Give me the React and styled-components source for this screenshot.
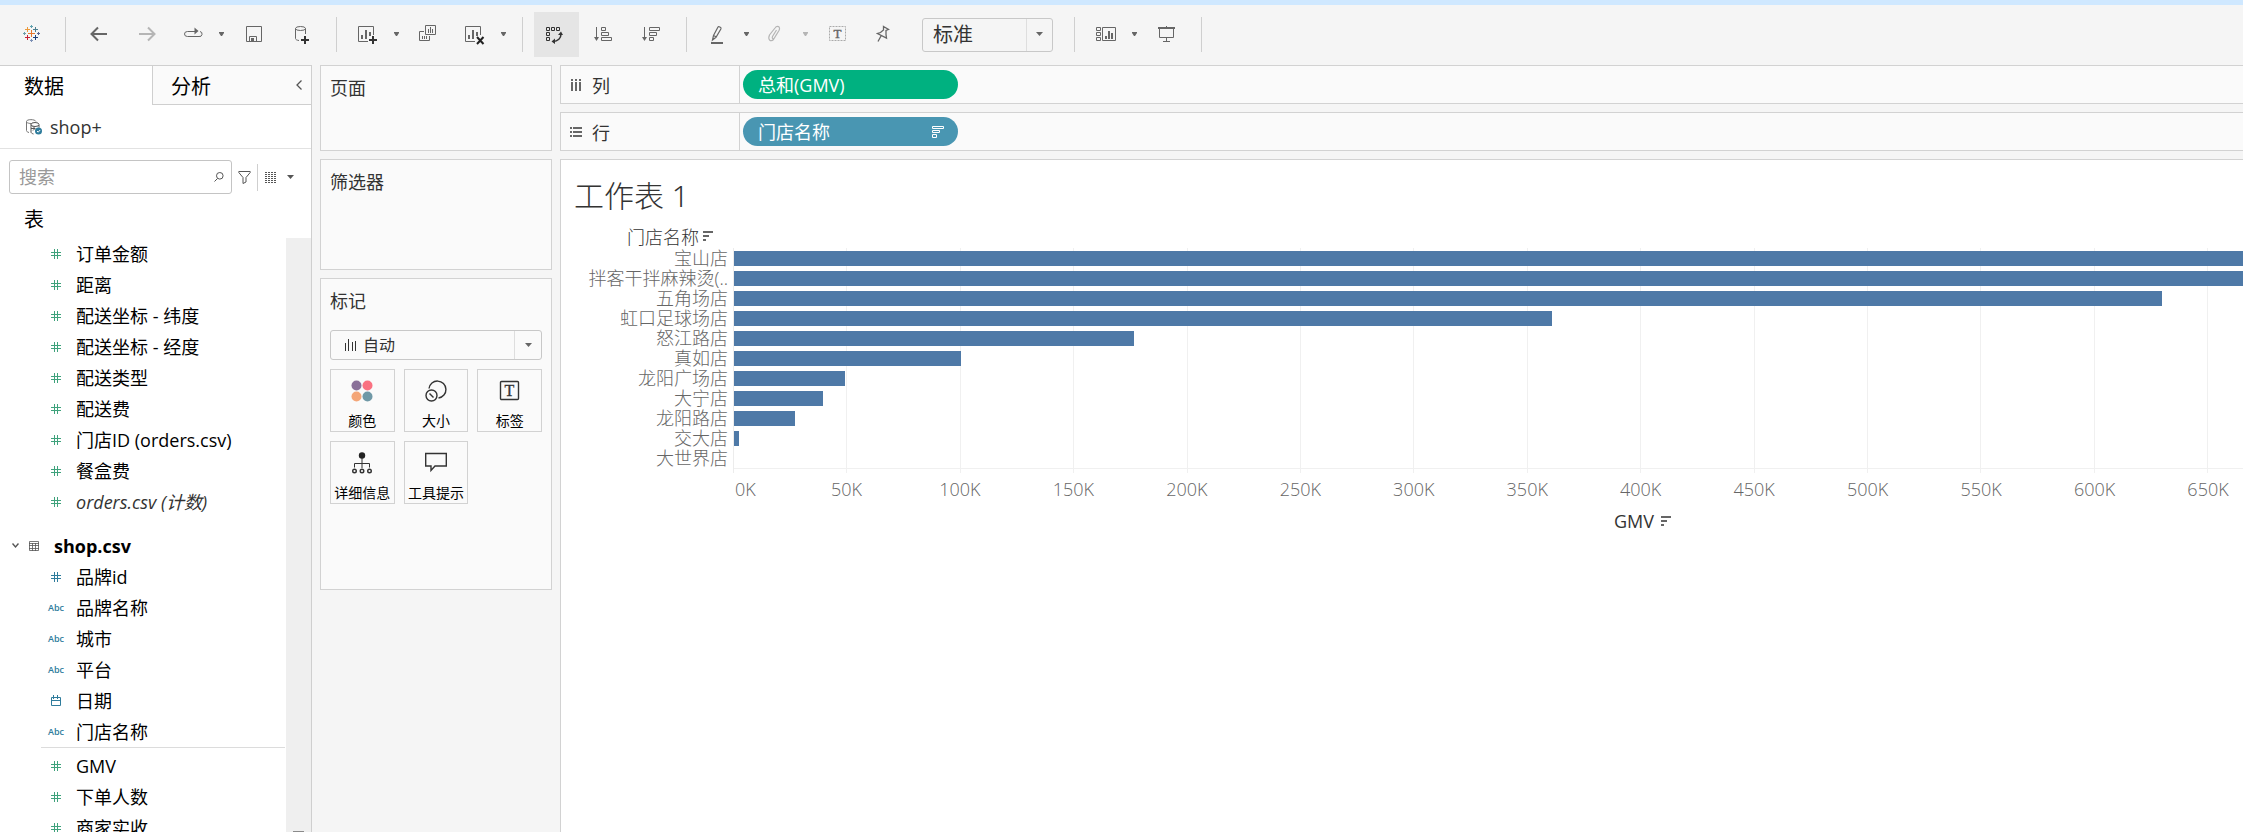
import React from "react";
import styled, { createGlobalStyle, css } from "styled-components";

const GlobalStyle = createGlobalStyle`
	* {
		box-sizing: border-box;
	}
	body {
		margin: 0;
		background: #f5f5f5;
		color: #333;
		font-family: "Open Sans", "Noto Sans CJK SC", sans-serif;
		font-size: 18px;
	}
	button, input, select {
		font-family: inherit;
		color: inherit;
	}
	button {
		padding: 0;
		border: 0;
		background: none;
		cursor: pointer;
	}
	h1, h2, h3, ul {
		margin: 0;
		padding: 0;
		font-weight: 400;
	}
	ul {
		list-style: none;
	}
	svg {
		display: block;
		flex: none;
	}
`;

const Page = styled.div`
	display: flex;
	flex-direction: column;
	height: 100vh;
	overflow: hidden;
	border-top: 5px solid #cfe8ff;
`;

/* toolbar */

const Toolbar = styled.header`
	display: flex;
	flex: none;
	align-items: center;
	gap: 3px;
	padding: 7px 0 8px 9px;
`;

const ToolButton = styled.button`
	display: flex;
	flex: none;
	align-items: center;
	justify-content: center;
	width: ${props => props.$split ? "41px" : "45px"};
	height: 45px;
	color: ${props => props.$active ? "#333" : "#666"};
	background: ${props => props.$active ? "#e5e5e5" : "transparent"};
	&:disabled {
		color: #b5b5b5;
	}
`;

const CaretButton = styled(ToolButton)`
	width: 15px;
`;

const SplitTool = styled.div`
	display: flex;
`;

const ToolDivider = styled.span`
	flex: none;
	width: 1px;
	height: 35px;
	margin: 0 8px;
	background: #cfcfcf;
`;

const SelectBox = styled.label`
	display: grid;
	grid-template-columns: 1fr ${props => props.$large ? "26px" : "27px"};
	align-items: center;
	height: ${props => props.$large ? "34px" : "30px"};
	border: 1px solid #c8c8c8;
	border-radius: 3px;
	color: #333;
	${props => props.$large && css`
		width: 131px;
		margin: 0 10px;
	`}
	select {
		grid-area: 1 / 1 / 2 / 3;
		width: 100%;
		height: 100%;
		padding: 0 0 0 ${props => props.$large ? "10px" : "32px"};
		border: 0;
		appearance: none;
		background: none;
		font-size: ${props => props.$large ? "20px" : "16px"};
	}
`;

const SelectCaret = styled.span`
	display: flex;
	grid-area: 1 / 2;
	align-items: center;
	justify-content: center;
	height: 100%;
	border-left: 1px solid #dedede;
	color: #666;
	pointer-events: none;
`;

/* data pane */

const Workspace = styled.div`
	display: flex;
	flex: 1;
	gap: 8px;
	min-height: 0;
`;

const DataPane = styled.aside`
	display: flex;
	flex: none;
	flex-direction: column;
	width: 312px;
	border: solid #cfcfcf;
	border-width: 1px 1px 0 0;
	background: #fff;
`;

const Tabs = styled.div`
	display: grid;
	flex: none;
	grid-template-columns: 152px 1fr;
	height: 39px;
`;

const Tab = styled.button`
	display: flex;
	align-items: center;
	justify-content: space-between;
	padding: 0 8px 0 ${props => props.$active ? "24px" : "18px"};
	border: solid #cfcfcf;
	border-width: ${props => props.$active ? "0" : "0 0 1px 1px"};
	background: ${props => props.$active ? "#fff" : "#fafafa"};
	color: #000;
	font-size: 20px;
	svg {
		color: #555;
	}
`;

const Source = styled.div`
	display: flex;
	flex: none;
	align-items: center;
	gap: 8px;
	height: 44px;
	padding-left: 26px;
	border-bottom: 1px solid #e2e2e2;
	line-height: 24px;
`;

const SearchRow = styled.div`
	display: flex;
	flex: none;
	align-items: center;
	gap: 6px;
	padding: 11px 0 0 9px;
	color: #555;
`;

const SearchBox = styled.label`
	display: flex;
	align-items: center;
	width: 223px;
	height: 34px;
	padding: 0 7px 0 9px;
	border: 1px solid #c4c4c4;
	border-radius: 3px;
	input {
		flex: 1;
		min-width: 0;
		padding: 0;
		border: 0;
		outline: 0;
		background: none;
		font-size: 18px;
	}
	input::placeholder {
		color: #999;
	}
`;

const ViewButton = styled.button`
	display: flex;
	align-items: center;
	gap: 9px;
	height: 27px;
	padding-left: 7px;
	border-left: 1px solid #cfcfcf;
`;

const TablesTitle = styled.h2`
	flex: none;
	padding: 11px 0 3px 24px;
	color: #000;
	font-size: 20px;
	line-height: 30px;
`;

const FieldArea = styled.div`
	display: flex;
	flex: 1;
	min-height: 0;
`;

const FieldScroll = styled.div`
	flex: 1;
	overflow: hidden;
`;

const ScrollTrack = styled.div`
	display: flex;
	align-items: flex-end;
	justify-content: center;
	width: 25px;
	background: #efefef;
	&::after {
		content: "";
		width: 11px;
		height: 1px;
		background: #8a8a8a;
	}
`;

const Field = styled.li`
	display: grid;
	grid-template-columns: 16px 1fr;
	gap: 12px;
	align-items: center;
	height: 31px;
	padding-left: 48px;
	color: ${props => props.$italic ? "#333" : "#000"};
	font-style: ${props => props.$italic ? "italic" : "normal"};
	line-height: 24px;
	white-space: nowrap;
	svg {
		justify-self: center;
		color: ${props => props.$measure ? "#3fa27c" : "#2f7c9c"};
	}
`;

const TextType = styled.span`
	color: #2f7c9c;
	font-size: 9px;
	font-weight: 600;
	line-height: 12px;
`;

const TableName = styled.h3`
	display: grid;
	grid-template-columns: 7px 10px 1fr;
	column-gap: 10px;
	align-items: center;
	height: 31px;
	margin-top: 13px;
	padding-left: 12px;
	color: #000;
	font-size: 18px;
	font-weight: 700;
	span {
		padding-left: 5px;
	}
	svg {
		color: #555;
	}
`;

const FieldDivider = styled.li`
	height: 3px;
	margin: 0 1px 0 41px;
	border-top: 1px solid #dcdcdc;
`;

/* cards */

const Cards = styled.section`
	display: flex;
	flex: none;
	flex-direction: column;
	gap: 8px;
	width: 232px;
`;

const Card = styled.div`
	height: ${props => props.$height}px;
	padding: 8px 9px;
	border: 1px solid #d2d2d2;
	background: #fafafa;
`;

const CardTitle = styled.h2`
	font-size: 18px;
	line-height: 28px;
`;

const MarkType = styled.div`
	display: grid;
	margin: 15px 0 9px;
	> * {
		grid-area: 1 / 1;
	}
	> svg {
		margin: 0 0 0 15px;
		align-self: center;
		pointer-events: none;
	}
`;

const MarkGrid = styled.div`
	display: grid;
	grid-template-columns: repeat(3, 1fr);
	gap: 9px;
`;

const MarkButton = styled.button`
	display: flex;
	flex-direction: column;
	align-items: center;
	justify-content: space-between;
	height: 63px;
	padding-top: 10px;
	border: 1px solid #d2d2d2;
	background: #fafafa;
	color: #000;
	font-size: 14px;
	line-height: 20px;
	white-space: nowrap;
`;

/* shelves and sheet */

const Main = styled.main`
	display: flex;
	flex: 1;
	flex-direction: column;
	gap: 8px;
	min-width: 0;
`;

const Shelf = styled.div`
	display: flex;
	flex: none;
	height: 39px;
	border: 1px solid #d2d2d2;
	border-right: 0;
	background: #fafafa;
`;

const ShelfName = styled.div`
	display: flex;
	align-items: center;
	gap: 10px;
	width: 179px;
	padding-left: 9px;
	border-right: 1px solid #d2d2d2;
	svg {
		color: #666;
	}
`;

const Pill = styled.button`
	display: flex;
	align-items: center;
	justify-content: space-between;
	width: 215px;
	height: 29px;
	margin: 4px 3px;
	padding: 0 14px 0 15px;
	border-radius: 15px;
	background: ${props => props.$measure ? "#00b180" : "#4996b2"};
	color: #fff;
	font-size: 18px;
	line-height: 24px;
`;

const Sheet = styled.div`
	flex: 1;
	min-height: 0;
	padding-top: 16px;
	border: solid #d2d2d2;
	border-width: 1px 0 0 1px;
	background: #fff;
`;

const SheetTitle = styled.h1`
	margin: 0 0 8px 13px;
	font-family: "Noto Sans", "Noto Sans CJK SC", sans-serif;
	font-size: 30px;
	font-weight: 300;
	line-height: 40px;
`;

const Chart = styled.div`
	display: flex;
	font-weight: 300;
`;

const Labels = styled.div`
	flex: none;
	width: 172px;
	text-align: right;
	white-space: nowrap;
`;

const LabelHeader = styled.div`
	display: flex;
	align-items: center;
	justify-content: flex-end;
	gap: 4px;
	height: 24px;
	padding-right: 20px;
`;

const Label = styled.div`
	padding-right: 5px;
	color: #666;
	line-height: 20px;
`;

const Plot = styled.div`
	flex: 1;
	min-width: 0;
	padding-top: 24px;
	overflow: hidden;
`;

const Scale = styled.div`
	width: 120%;
`;

const Rows = styled.div`
	position: relative;
	height: 225px;
	border-left: 1px solid #ececec;
`;

const GridLine = styled.span`
	position: absolute;
	top: 0;
	bottom: 0;
	width: 1px;
	margin-left: -1px;
	background: #f0f0f0;
`;

const BarRow = styled.div`
	position: relative;
	height: 20px;
	padding-top: 3px;
`;

const Bar = styled.div`
	height: 15px;
	background: #4e79a7;
`;

const BaseLine = styled.div`
	height: 1px;
	background: #f0f0f0;
`;

const Axis = styled.div`
	position: relative;
	height: 26px;
	margin: 6px 0 4px;
	color: #666;
	line-height: 20px;
`;

const Tick = styled.span`
	position: absolute;
	transform: ${props => props.$first ? "none" : "translateX(-50%)"};
	padding-left: ${props => props.$first ? "2px" : "0"};
`;

const AxisTitle = styled.div`
	display: flex;
	align-items: center;
	justify-content: center;
	gap: 7px;
	padding-left: 7px;
	font-weight: 400;
	line-height: 24px;
`;

const Icon = ({ w = 21, h = 21, children }) => (
	<svg width={w} height={h} viewBox={`0 0 ${w} ${h}`} fill="none" stroke="currentColor" aria-hidden="true">
		{children}
	</svg>
);

const Caret = () => (
	<Icon w={7} h={5}><path d="M1 0h5v1L4 4H3L1 1z" fill="currentColor" stroke="none" /></Icon>
);

const WideCaret = () => (
	<Icon w={7} h={5}><path d="M0 0h7L3.5 4z" fill="currentColor" stroke="none" /></Icon>
);

const LOGO = [
	[10.5, 9.5, 3.5, "#e8762c"],
	[6.5, 5.5, 2.5, "#eb9a3c"],
	[14.5, 5.5, 2.5, "#4d7f8f"],
	[6.5, 13.5, 2.5, "#c72035"],
	[14.5, 13.5, 2.5, "#1f3f7a"],
	[10.5, 2.5, 1.5, "#5fa0ad"],
	[10.5, 16.5, 1.5, "#7b8fb5"],
	[3.5, 9.5, 1.5, "#6d9ca8"],
	[17.5, 9.5, 1.5, "#5c6692"]
];

const LogoIcon = () => (
	<Icon>
		{ LOGO.map(([x, y, r, color]) => (
			<path key={`${x}-${y}`} d={`M${x - r} ${y}h${r * 2}M${x} ${y - r}v${r * 2}`} stroke={color} />
		)) }
	</Icon>
);

const BackIcon = () => <Icon><path d="M18 10H3M9 3.500L2.500 10 9 16.500" strokeWidth="2" /></Icon>;

const ForwardIcon = () => <Icon><path d="M2 10h15M11 3.500l6.500 6.500L11 16.500" strokeWidth="2" /></Icon>;

const ReplayIcon = () => (
	<Icon>
		<path d="M12 7.500H4.500a3 2.500 0 0 0 0 5h11.500a2.500 2.500 0 0 0 1-5" />
		<path d="M11.500 3.500l4 3.500-4 3.500z" fill="currentColor" stroke="none" />
	</Icon>
);

const SaveIcon = () => (
	<Icon>
		<path d="M2.500 2.500h15v15h-15zM5.500 17v-4.500h7V17" />
		<path d="M7 14h3v3H7z" fill="currentColor" stroke="none" />
	</Icon>
);

const AddSourceIcon = () => (
	<Icon>
		<ellipse cx="8.500" cy="4.500" rx="5" ry="2" />
		<path d="M3.500 4.500v10c0 1 1.500 1.800 3.500 2M13.500 4.500V10" />
		<path d="M13 12v8M9 16h8" stroke="#333" strokeWidth="2" />
	</Icon>
);

const SheetIcon = ({ children }) => (
	<Icon>
		<path d="M15.500 11V2.500H.5v15H10" />
		<path d="M3 11h2v4H3zM7 6h2v9H7zM11 8h2v4h-2z" fill="currentColor" stroke="none" />
		{children}
	</Icon>
);

const DuplicateIcon = () => (
	<Icon>
		<path d="M6.500 1.500h10v9h-10zM5 7.500H.5v9h10V12M9.500 5v4M11.500 3v6M13.500 5v4M3.500 12v3M5.500 12v3M7.500 12v3" />
	</Icon>
);

const SwapIcon = () => (
	<Icon>
		<path d="M.5 3.500h3v3h-3zM5.500 3.500h3v3h-3zM10.500 3.500h3v3h-3zM.5 8.500h3v3h-3zM.5 13.500h3v3h-3z" />
		<path d="M15 10c0 4-3 7.500-8 7.500" strokeWidth="1.500" />
		<path d="M12 11l3-3.500 2 3.500zM9 14.500l-3.500 3L9 20z" fill="currentColor" stroke="none" />
	</Icon>
);

const SortAscIcon = () => (
	<Icon>
		<path d="M2.500 3v12M7.500 3.500h4v3h-4zM7.500 8.500h7v3h-7zM7.500 13.500h10v3h-10z" />
		<path d="M0 13h5l-2.500 4z" fill="currentColor" stroke="none" />
	</Icon>
);

const SortDescIcon = () => (
	<Icon>
		<path d="M2.500 3v12M7.500 3.500h10v3h-10zM7.500 8.500h7v3h-7zM7.500 13.500h4v3h-4z" />
		<path d="M0 13h5l-2.500 4z" fill="currentColor" stroke="none" />
	</Icon>
);

const HighlightIcon = () => (
	<Icon>
		<path d="M4.500 16l1-4.500L10 3c.5-.8 3.500.3 3 1.800l-5 8.500zM5.500 11.500l3 1.500" strokeWidth="1.200" />
		<path d="M3 18h12v2H3z" fill="currentColor" stroke="none" />
	</Icon>
);

const ClipIcon = () => (
	<Icon>
		<path d="M9.500 6l-4 6.500c-1 2.200 1 3 2 1.300l4.500-7.300c2-4-2-5.500-4-2.500L2.500 11c-2 4.500 1 7.500 4 4.500L10.500 9" strokeWidth="1.200" />
	</Icon>
);

const TextIcon = () => (
	<Icon>
		<path d="M1.500 2.500h16v14h-16z" stroke="#aaa" strokeDasharray="2 1" />
		<text x="9.500" y="14" textAnchor="middle" fontFamily="Liberation Serif" fontSize="13" fill="currentColor" strokeWidth=".4">T</text>
	</Icon>
);

const PinIcon = () => (
	<Icon>
		<path d="M7.500 2.500l5 3-2.500 1v4l.5 3.500-9-4.500 3-1 3-2.500zM5 12l-3 5.500" strokeWidth="1.300" />
	</Icon>
);

const ShowMeIcon = () => (
	<Icon>
		<path d="M.5 3.500h4v3h-4zM.5 8.500h4v3h-4zM.5 13.500h4v3h-4zM6.500 3.500h13v13h-13z" />
		<path d="M9 12h2v3H9zM12 7h2v8h-2zM15 9h2v6h-2z" fill="currentColor" stroke="none" />
	</Icon>
);

const PresentIcon = () => (
	<Icon>
		<path d="M9.500 2v2M2.500 5v8.500h14V5M9.500 14v3M6 17.500h7" />
		<path d="M1 4h17" strokeWidth="2" />
	</Icon>
);

const SourceIcon = () => (
	<Icon w={16} h={16}>
		<path d="M10 2.500C9 0 .5 0 .5 2.500v9c0 1 1 1.700 2.500 2M.5 3c1 1.200 3 1.500 4.500 1.500" stroke="#777" />
		<ellipse cx="9" cy="5.500" rx="4" ry="2" stroke="#555" />
		<path d="M5 5.500V13c0 1 1 1.500 2.500 2M13 6v2.500M5 9.500h4M7 7.500l2 2-2 2" stroke="#555" />
		<circle cx="12.500" cy="12" r="3.500" fill="#2f7c9c" stroke="none" />
		<path d="M11 12l1.200 1.200L14.200 11" stroke="#fff" />
	</Icon>
);

const HashIcon = () => <Icon w={10} h={10}><path d="M3.500 0v10M6.500 0v10M0 3.500h10M0 6.500h10" /></Icon>;

const DateIcon = () => (
	<Icon w={10} h={11}><path d="M.5 2.500h9v8h-9zM1 5.500h8M2.500 0v4M6.500 0v4" /></Icon>
);

const TableIcon = () => (
	<Icon w={10} h={10}><path d="M.5 .5h9v9h-9zM0 2.500h10M0 4.500h10M0 7.500h10M3.500 2v8M6.500 2v8" strokeWidth=".8" /></Icon>
);

const PillSortIcon = () => (
	<Icon w={12} h={12}><path d="M.5 .5h11v2H.5zM.5 4.500h7v2h-7zM.5 8.500h4v3h-4z" /></Icon>
);

const SortIcon = () => <Icon w={10} h={10}><path d="M0 1h10M0 5h6M0 9h3" stroke="#666" strokeWidth="2" /></Icon>;

const MARKS = [
	{ name: "颜色", icon: (
		<Icon w={22} h={22}>
			<g stroke="none">
				<circle cx="5.500" cy="5.500" r="5" fill="#8a7199" />
				<circle cx="16.500" cy="5.500" r="5" fill="#fa7181" />
				<circle cx="5.500" cy="16.500" r="5" fill="#f4a678" />
				<circle cx="16.500" cy="16.500" r="5" fill="#6f98a6" />
			</g>
		</Icon>
	) },
	{ name: "大小", icon: (
		<Icon w={22} h={22}>
			<path d="M4 8.500a8.500 8.500 0 1 1 9.500 9.500" stroke="#333" strokeWidth="1.400" />
			<circle cx="6.500" cy="15.500" r="5.500" stroke="#333" strokeWidth="1.400" />
			<path d="M4.500 13.500l4 4" stroke="#333" strokeWidth="1.400" />
		</Icon>
	) },
	{ name: "标签", icon: (
		<Icon w={22} h={22}>
			<rect x="1.500" y="1.500" width="18" height="18" rx="1" stroke="#333" strokeWidth="1.400" />
			<text x="10.500" y="16" textAnchor="middle" fontFamily="Liberation Serif" fontSize="16" fill="#333" stroke="#333" strokeWidth=".3">T</text>
		</Icon>
	) },
	{ name: "详细信息", icon: (
		<Icon w={22} h={22}>
			<circle cx="11" cy="3.500" r="3.200" fill="#222" stroke="none" />
			<path d="M11 6v10M3.500 15.500v-4h15v4" stroke="#333" />
			<g stroke="#333" strokeWidth="1.400">
				<circle cx="3.500" cy="19" r="1.800" />
				<circle cx="11" cy="19" r="1.800" />
				<circle cx="18.500" cy="19" r="1.800" />
			</g>
		</Icon>
	) },
	{ name: "工具提示", icon: (
		<Icon w={22} h={22}>
			<path d="M.7 1.500h20.600V14H10l-4 4.500V14H.7z" stroke="#333" strokeWidth="1.400" />
		</Icon>
	) }
];

const ORDER_FIELDS = ["订单金额", "距离", "配送坐标 - 纬度", "配送坐标 - 经度", "配送类型", "配送费", "门店ID (orders.csv)", "餐盒费"];

const SHOP_DIMENSIONS = [
	{ name: "品牌id", type: "number" },
	{ name: "品牌名称", type: "text" },
	{ name: "城市", type: "text" },
	{ name: "平台", type: "text" },
	{ name: "日期", type: "date" },
	{ name: "门店名称", type: "text" }
];

const SHOP_MEASURES = ["GMV", "下单人数", "商家实收"];

// thousands
const AXIS_MAX = 798.5;
const TICKS = [0, 50, 100, 150, 200, 250, 300, 350, 400, 450, 500, 550, 600, 650];

const STORES = [
	{ name: "宝山店", gmv: 760 },
	{ name: "拌客干拌麻辣烫(..", gmv: 720 },
	{ name: "五角场店", gmv: 629.5 },
	{ name: "虹口足球场店", gmv: 360.7 },
	{ name: "怒江路店", gmv: 176.3 },
	{ name: "真如店", gmv: 100.1 },
	{ name: "龙阳广场店", gmv: 49 },
	{ name: "大宁店", gmv: 39.3 },
	{ name: "龙阳路店", gmv: 26.9 },
	{ name: "交大店", gmv: 2.3 },
	{ name: "大世界店", gmv: 0 }
];

const percent = value => `${value / AXIS_MAX * 100}%`;

const Tool = ({ label, menu, disabled, active, children }) => (
	menu ? (
		<SplitTool>
			<ToolButton $split aria-label={label} disabled={disabled}>{children}</ToolButton>
			<CaretButton aria-label={`${label}菜单`} disabled={disabled}><Caret /></CaretButton>
		</SplitTool>
	) : (
		<ToolButton aria-label={label} disabled={disabled} $active={active}>{children}</ToolButton>
	)
);

const FieldType = ({ type }) => {
	if (type === "text") return <TextType>Abc</TextType>;
	return type === "date" ? <DateIcon /> : <HashIcon />;
};

const TopBar = () => (
	<Toolbar>
		<Tool label="起始页"><LogoIcon /></Tool>
		<ToolDivider />
		<Tool label="撤消"><BackIcon /></Tool>
		<Tool label="重做" disabled><ForwardIcon /></Tool>
		<Tool label="重播动画" menu><ReplayIcon /></Tool>
		<Tool label="保存"><SaveIcon /></Tool>
		<Tool label="新建数据源"><AddSourceIcon /></Tool>
		<ToolDivider />
		<Tool label="新建工作表" menu>
			<SheetIcon><path d="M15 12v8M11 16h8" stroke="#333" strokeWidth="2" /></SheetIcon>
		</Tool>
		<Tool label="复制工作表"><DuplicateIcon /></Tool>
		<Tool label="清除工作表" menu>
			<SheetIcon><path d="M12 13l6.500 7M18.500 13L12 20" stroke="#222" strokeWidth="2" /></SheetIcon>
		</Tool>
		<ToolDivider />
		<Tool label="交换行和列" active><SwapIcon /></Tool>
		<Tool label="升序排序"><SortAscIcon /></Tool>
		<Tool label="降序排序"><SortDescIcon /></Tool>
		<ToolDivider />
		<Tool label="突出显示" menu><HighlightIcon /></Tool>
		<Tool label="组成员" menu disabled><ClipIcon /></Tool>
		<Tool label="显示标记标签"><TextIcon /></Tool>
		<Tool label="固定轴"><PinIcon /></Tool>
		<SelectBox $large>
			<select aria-label="适合" defaultValue="标准">
				<option>标准</option>
			</select>
			<SelectCaret><WideCaret /></SelectCaret>
		</SelectBox>
		<ToolDivider />
		<Tool label="智能推荐" menu><ShowMeIcon /></Tool>
		<Tool label="演示模式"><PresentIcon /></Tool>
		<ToolDivider />
	</Toolbar>
);

const DataPanel = () => (
	<DataPane>
		<Tabs>
			<Tab $active>数据</Tab>
			<Tab>
				分析
				<Icon w={7} h={10}><path d="M5.500 .5L1 5l4.500 4.500" strokeWidth="1.300" /></Icon>
			</Tab>
		</Tabs>
		<Source><SourceIcon />shop+</Source>
		<SearchRow>
			<SearchBox>
				<input type="text" aria-label="搜索" placeholder="搜索" />
				<Icon w={10} h={10}>
					<circle cx="5.800" cy="3.800" r="3.300" />
					<path d="M3.500 6.500L.5 9.500" />
				</Icon>
			</SearchBox>
			<button aria-label="筛选字段">
				<Icon w={13} h={13}><path d="M.8 .5h11.400v1L8 6.500V11l-3 1.500v-6L.8 1.500z" /></Icon>
			</button>
			<ViewButton aria-label="视图选项">
				<Icon w={13} h={11}>
					<path d="M0 .5h12M0 2.500h12M0 4.500h12M0 6.500h12M0 8.500h12M0 10.500h12" strokeDasharray="2 1" />
				</Icon>
				<WideCaret />
			</ViewButton>
		</SearchRow>
		<TablesTitle>表</TablesTitle>
		<FieldArea>
			<FieldScroll>
				<ul>
					{ ORDER_FIELDS.map(name => (
						<Field key={name} $measure><HashIcon />{name}</Field>
					)) }
					<Field $measure $italic><HashIcon />orders.csv (计数)</Field>
				</ul>
				<TableName>
					<Icon w={7} h={7}><path d="M.5 1.500l3 3.500 3-3.500" strokeWidth="1.400" /></Icon>
					<TableIcon />
					<span>shop.csv</span>
				</TableName>
				<ul>
					{ SHOP_DIMENSIONS.map(field => (
						<Field key={field.name}><FieldType type={field.type} />{field.name}</Field>
					)) }
					<FieldDivider />
					{ SHOP_MEASURES.map(name => (
						<Field key={name} $measure><HashIcon />{name}</Field>
					)) }
				</ul>
			</FieldScroll>
			<ScrollTrack />
		</FieldArea>
	</DataPane>
);

const MarksCard = () => (
	<Card $height={312}>
		<CardTitle>标记</CardTitle>
		<MarkType>
			<SelectBox>
				<select aria-label="标记类型" defaultValue="自动">
					<option>自动</option>
				</select>
				<SelectCaret><WideCaret /></SelectCaret>
			</SelectBox>
			<Icon w={11} h={12}><path d="M.5 4v8M3.500 0v12M7.500 3v9M10.500 2v10" /></Icon>
		</MarkType>
		<MarkGrid>
			{ MARKS.map(mark => (
				<MarkButton key={mark.name}>{mark.icon}{mark.name}</MarkButton>
			)) }
		</MarkGrid>
	</Card>
);

const BarChart = () => (
	<Chart>
		<Labels>
			<LabelHeader>门店名称<SortIcon /></LabelHeader>
			{ STORES.map(store => <Label key={store.name}>{store.name}</Label>) }
		</Labels>
		<Plot>
			<Scale>
				<Rows>
					{ TICKS.slice(1).map(tick => <GridLine key={tick} style={{ left: percent(tick) }} />) }
					{ STORES.map(store => (
						<BarRow key={store.name}><Bar style={{ width: percent(store.gmv) }} /></BarRow>
					)) }
					<BaseLine />
				</Rows>
				<Axis>
					{ TICKS.map(tick => (
						<Tick key={tick} $first={tick === 0} style={{ left: percent(tick) }}>{tick}K</Tick>
					)) }
				</Axis>
				<AxisTitle>GMV<SortIcon /></AxisTitle>
			</Scale>
		</Plot>
	</Chart>
);

const App = () => (
	<>
		<GlobalStyle />
		<Page>
			<TopBar />
			<Workspace>
				<DataPanel />
				<Cards>
					<Card $height={86}><CardTitle>页面</CardTitle></Card>
					<Card $height={111}><CardTitle>筛选器</CardTitle></Card>
					<MarksCard />
				</Cards>
				<Main>
					<Shelf>
						<ShelfName>
							<Icon w={12} h={12}><path d="M2 0v2M6 0v2M10 0v2M2 3v9M6 3v9M10 3v9" strokeWidth="2" /></Icon>
							列
						</ShelfName>
						<Pill $measure>总和(GMV)</Pill>
					</Shelf>
					<Shelf>
						<ShelfName>
							<Icon w={12} h={12}><path d="M0 2h2M0 6h2M0 10h2M3 2h9M3 6h9M3 10h9" strokeWidth="2" /></Icon>
							行
						</ShelfName>
						<Pill>门店名称<PillSortIcon /></Pill>
					</Shelf>
					<Sheet>
						<SheetTitle>工作表 1</SheetTitle>
						<BarChart />
					</Sheet>
				</Main>
			</Workspace>
		</Page>
	</>
);

export default App;
